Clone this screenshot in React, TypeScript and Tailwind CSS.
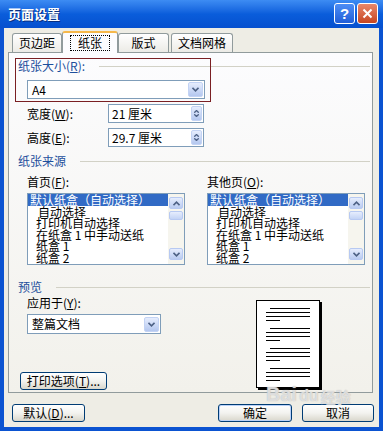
import React from "react";

const font = "font-['SimSun','Noto_Sans_CJK_SC',sans-serif]";

function Chevron({ up = false }: { up?: boolean }) {
  return (
    <svg width="7" height="5" viewBox="0 0 7 5">
      <path
        d={up ? "M0.5 4.2 L3.5 1.2 L6.5 4.2" : "M0.5 0.8 L3.5 3.8 L6.5 0.8"}
        stroke="#4d6185"
        strokeWidth="1.6"
        fill="none"
      />
    </svg>
  );
}

function Combo({ value, width, height }: { value: string; width: string; height: string }) {
  return (
    <div className={`flex items-center border border-[#7f9db9] bg-white ${width} ${height}`}>
      <span className="flex-1 pl-[4px] text-[12px] leading-[14px] text-black">{value}</span>
      <div className="mr-[1px] flex h-[15px] w-[15px] items-center justify-center rounded-[2px] border border-[#c3d3f4] bg-gradient-to-b from-[#e6edfd] to-[#b4c7ef]">
        <Chevron />
      </div>
    </div>
  );
}

function Spin({ value }: { value: string }) {
  return (
    <div className="flex h-[19px] w-[96px] items-center border border-[#7f9db9] bg-white">
      <span className="flex-1 pl-[3px] text-[12px] leading-[14px]">{value}</span>
      <div className="mr-[1px] flex h-[15px] w-[11px] flex-col rounded-[2px] border border-[#c3d3f4] bg-gradient-to-b from-[#e6edfd] to-[#b4c7ef]">
        <div className="flex flex-1 items-end justify-center">
          <svg width="5" height="3" viewBox="0 0 5 3">
            <path d="M0.3 2.7 L2.5 0.5 L4.7 2.7" stroke="#4d6185" strokeWidth="1.3" fill="none" />
          </svg>
        </div>
        <div className="flex flex-1 items-start justify-center pt-[1px]">
          <svg width="5" height="3" viewBox="0 0 5 3">
            <path d="M0.3 0.3 L2.5 2.5 L4.7 0.3" stroke="#4d6185" strokeWidth="1.3" fill="none" />
          </svg>
        </div>
      </div>
    </div>
  );
}

const sources = [
  { text: "默认纸盒（自动选择）", pad: "pl-[2px]", sel: true },
  { text: "自动选择", pad: "pl-[10px]", sel: false },
  { text: "打印机自动选择", pad: "pl-[8px]", sel: false },
  { text: "在纸盒 1 中手动送纸", pad: "pl-[8px]", sel: false },
  { text: "纸盒 1", pad: "pl-[8px]", sel: false },
  { text: "纸盒 2", pad: "pl-[8px]", sel: false },
];

function ListBox() {
  return (
    <div className="flex h-[72px] w-[158px] border border-[#7f9db9] bg-white">
      <div className="min-w-0 flex-1">
        {sources.map((s) => (
          <div
            key={s.text}
            className={`h-[11.6px] whitespace-nowrap text-[12px] leading-[11.6px] ${s.pad} ${
              s.sel ? "bg-[#316ac5] text-white" : "text-black"
            }`}
          >
            {s.text}
          </div>
        ))}
      </div>
      <div className="flex w-[16px] flex-col bg-[#f6f5ee] p-[1px] pt-[3px]">
        <div className="flex h-[12px] items-center justify-center rounded-[2px] border border-[#b7c9f2] bg-gradient-to-b from-[#e6edfd] to-[#b9cbf1]">
          <Chevron up />
        </div>
        <div className="mt-[2px] h-[9px] rounded-[2px] border border-[#b7c9f2] bg-gradient-to-b from-[#e6edfd] to-[#c3d3f5]" />
        <div className="flex-1" />
        <div className="mb-[3px] flex h-[12px] items-center justify-center rounded-[2px] border border-[#b7c9f2] bg-gradient-to-b from-[#e6edfd] to-[#b9cbf1]">
          <Chevron />
        </div>
      </div>
    </div>
  );
}

function GroupLabel({ children }: { children: React.ReactNode }) {
  return (
    <div className="flex h-[14px] items-center">
      <span className="whitespace-nowrap text-[12px] leading-[14px] text-[#1d4f9c]">{children}</span>
      <div className="ml-[14px] h-px flex-1 bg-[#d2d1c6]" />
    </div>
  );
}

function Btn({
  children,
  width,
  isDefault = false,
}: {
  children: React.ReactNode;
  width: string;
  isDefault?: boolean;
}) {
  return (
    <div
      className={`flex h-[18px] items-center justify-center rounded-[3px] border border-[#003c74] bg-gradient-to-b from-white via-[#f3f3ef] to-[#d9d7cc] text-[12px] leading-[14px] text-black ${width} ${
        isDefault ? "shadow-[inset_0_0_0_1px_#b9d1f8]" : ""
      }`}
    >
      {children}
    </div>
  );
}

function PageLines() {
  return (
    <div className="flex flex-col pt-[7px]">
      {[0, 1, 2, 3].map((g) => (
        <div key={g} className="mb-[7px] flex flex-col gap-[3px]">
          <div className="ml-[13px] h-px w-[40px] bg-black" />
          <div className="ml-[9px] h-px w-[44px] bg-black" />
          <div className="ml-[9px] h-px w-[44px] bg-black" />
          <div className="ml-[9px] h-px w-[14px] bg-black" />
        </div>
      ))}
    </div>
  );
}

export default function App() {
  return (
    <div className={`flex h-[431px] w-[383px] flex-col bg-[#0b53d1] ${font}`}>
      {/* title bar */}
      <div className="flex h-[28px] items-start bg-gradient-to-b from-[#3d8cf3] via-[#0a5ddb] to-[#0650cf]">
        <span className="mt-[6px] ml-[8px] text-[13px] font-bold leading-[16px] text-white [text-shadow:1px_1px_0_#0a2f80]">
          页面设置
        </span>
        <div className="mt-[3px] ml-auto flex h-[21px] w-[21px] items-center justify-center rounded-[3px] border border-white bg-gradient-to-b from-[#4d8ef5] to-[#215ed8] text-[15px] font-bold leading-none text-white font-['Liberation_Sans',sans-serif]">
          ?
        </div>
        <div className="mt-[3px] mr-[5px] ml-[2px] flex h-[21px] w-[21px] items-center justify-center rounded-[3px] border border-white bg-gradient-to-b from-[#e8876a] to-[#c6451f]">
          <svg width="11" height="11" viewBox="0 0 11 11">
            <path d="M1.5 1.5 L9.5 9.5 M9.5 1.5 L1.5 9.5" stroke="white" strokeWidth="2" />
          </svg>
        </div>
      </div>

      {/* body */}
      <div className="relative mx-[4px] mb-[4px] flex flex-1 flex-col bg-[#eeede5] pt-[3px] pl-[4px] pr-[6px]">
        {/* tabs */}
        <div className="ml-[4px] flex h-[21px] items-end">
          <div className="flex h-[19px] w-[50px] items-center justify-center rounded-t-[3px] border border-b-0 border-[#919b9c] bg-gradient-to-b from-white to-[#ecebe6] text-[12px]">
            页边距
          </div>
          <div className="relative z-10 -mb-[1px] flex h-[22px] w-[56px] items-center justify-center rounded-t-[3px] border border-b-0 border-[#919b9c] border-t-2 border-t-[#f6b84a] bg-[#fcfcfe] text-[12px]">
            <span className="border border-dotted border-black px-[7px] leading-[14px]">纸张</span>
          </div>
          <div className="flex h-[19px] w-[51px] items-center justify-center rounded-t-[3px] border border-b-0 border-[#919b9c] bg-gradient-to-b from-white to-[#ecebe6] text-[12px]">
            版式
          </div>
          <div className="ml-[2px] flex h-[19px] w-[62px] items-center justify-center rounded-t-[3px] border border-b-0 border-[#919b9c] bg-gradient-to-b from-white to-[#ecebe6] text-[12px]">
            文档网格
          </div>
        </div>

        {/* panel */}
        <div className="relative flex h-[341px] flex-col border border-[#919b9c] bg-gradient-to-b from-[#fcfcfe] to-[#f2f1eb] pt-[6px] pl-[9px] pr-[2px] text-[12px] leading-[14px] text-black">
          {/* highlight box */}
          <div className="absolute top-[5px] left-[6px] h-[44px] w-[196px] border border-[#7a1f23]" />

          <GroupLabel>
            纸张大小(<u>R</u>):
          </GroupLabel>
          <div className="mt-[7px] ml-[9px]">
            <Combo value="A4" width="w-[178px]" height="h-[19px]" />
          </div>
          <div className="mt-[5px] ml-[9px] flex items-center">
            <span className="w-[81px]">
              宽度(<u>W</u>):
            </span>
            <Spin value="21 厘米" />
          </div>
          <div className="mt-[5px] ml-[9px] flex items-center">
            <span className="w-[81px]">
              高度(<u>E</u>):
            </span>
            <Spin value="29.7 厘米" />
          </div>

          <div className="mt-[7px]">
            <GroupLabel>纸张来源</GroupLabel>
          </div>
          <div className="mt-[7px] ml-[9px] flex gap-[22px]">
            <div className="flex flex-col">
              <span className="h-[14px]">
                首页(<u>F</u>):
              </span>
              <div className="mt-[4px]">
                <ListBox />
              </div>
            </div>
            <div className="flex flex-col">
              <span className="h-[14px]">
                其他页(<u>O</u>):
              </span>
              <div className="mt-[4px]">
                <ListBox />
              </div>
            </div>
          </div>

          <div className="mt-[15px]">
            <GroupLabel>预览</GroupLabel>
          </div>
          <div className="flex">
            <div className="flex w-[238px] flex-col">
              <span className="mt-[2px] ml-[9px] h-[14px]">
                应用于(<u>Y</u>):
              </span>
              <div className="mt-[4px] ml-[9px]">
                <Combo value="整篇文档" width="w-[134px]" height="h-[20px]" />
              </div>
              <div className="mt-[38px] ml-[2px]">
                <Btn width="w-[87px]">
                  打印选项(<u>T</u>)...
                </Btn>
              </div>
            </div>
            <div className="mt-[6px] h-[88px] w-[64px] border border-black bg-white shadow-[2px_2px_0_#000]">
              <PageLines />
            </div>
          </div>
        </div>

        {/* dialog buttons */}
        <div className="mt-[11px] flex">
          <div className="ml-[4px]">
            <Btn width="w-[73px]">
              默认(<u>D</u>)...
            </Btn>
          </div>
          <div className="ml-[133px]">
            <Btn width="w-[74px]" isDefault>
              确定
            </Btn>
          </div>
          <div className="ml-[10px]">
            <Btn width="w-[72px]">取消</Btn>
          </div>
        </div>

        {/* watermark */}
        <div className="pointer-events-none absolute top-[356px] left-[262px] flex items-end gap-[2px] font-['Liberation_Sans',sans-serif] text-[20px] font-bold leading-none text-white/60 [text-shadow:0_0_1px_#a8a8a8]">
          <span>Bai</span>
          <span className="text-[16px]">du</span>
          <span className={`${font} text-[15px]`}>经验</span>
        </div>
      </div>
    </div>
  );
}
